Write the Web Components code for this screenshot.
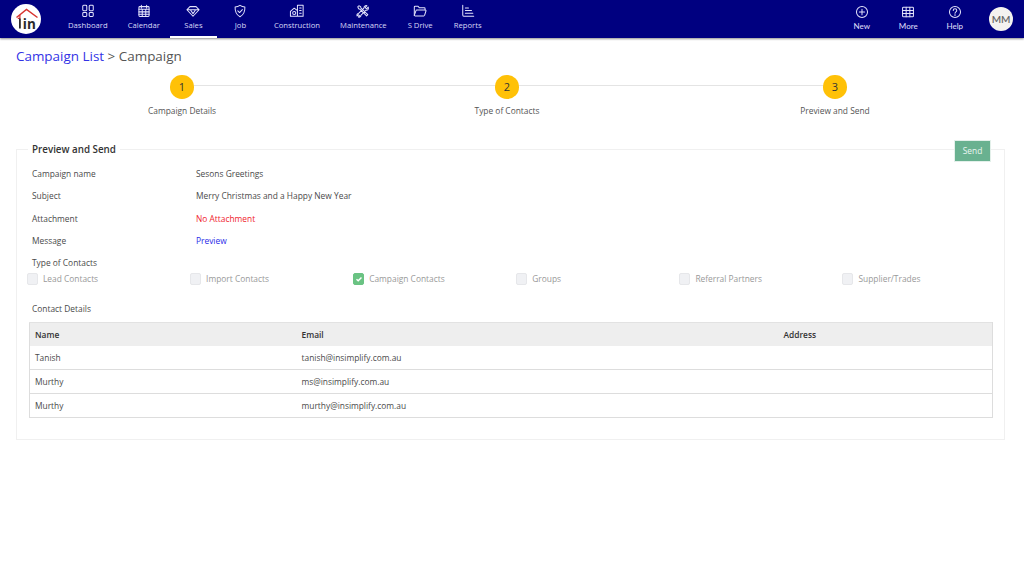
<!DOCTYPE html>
<html lang="en"><head><meta charset="utf-8"><title>Campaign</title>
<style>
html,body{margin:0;padding:0;background:#fff;width:1024px;height:580px;overflow:hidden;font-family:"Open Sans","Liberation Sans",sans-serif;color:#4a4a4a}
</style></head><body>
<app-header>
  <nav-item label="Dashboard"><svg viewBox="0 0 16 16"><rect x="2" y="1.500" width="4.6" height="6.100" rx="1"/><rect x="9.4" y="1.500" width="4.6" height="6.100" rx="1"/><rect x="2" y="9.800" width="4.6" height="4.400" rx="1"/><rect x="9.4" y="9.800" width="4.6" height="4.400" rx="1"/></svg></nav-item>
  <nav-item label="Calendar"><svg viewBox="0 0 16 16"><rect x="2.2" y="3" width="11.6" height="11.2" rx="1"/><path d="M5 1.5v3M11 1.5v3M2.2 6h11.6M2.2 9h11.6M2.2 11.7h11.6M6 6v8.2M10 6v8.2"/></svg></nav-item>
  <nav-item label="Sales" active><svg viewBox="0 0 16 16"><path d="M4.5 3h7L15 6.6 8 14 1 6.6zM1.2 6.6h13.6M5 6.6 8 11l3-4.4"/></svg></nav-item>
  <nav-item label="Job"><svg viewBox="0 0 16 16"><path d="M8 1.500c1.800 1.200 3.600 1.700 5.600 1.800.2 5-1 9-5.600 11.200C3.400 12.300 2.200 8.300 2.400 3.300 4.400 3.200 6.200 2.700 8 1.500z"/><path d="m5.500 7.800 2 2 3.200-3.400"/></svg></nav-item>
  <nav-item label="Construction"><svg viewBox="0 0 16 16"><path d="M.5 14V8.500L4.800 4.800 8.500 7.500V14zM8.500 14h6.500V1.500H8.500v6"/><circle cx="4.800" cy="10.300" r="1.800"/><path d="M11 4.500h1.800M11 7.500h1.800M11 10.500h1.800"/></svg></nav-item>
  <nav-item label="Maintenance"><svg viewBox="0 0 16 16"><path d="M2 3.200 3.300 2l2 1 .4 1.700 7.800 7.500-1.400 1.400-7.700-7.700L3 5.500zM14 3.500l-2 2-1.500-1.500 2-2c-1.800-.6-3.600.6-3.400 2.700L3 10.800c-1.600-.2-2.400 1.400-1.700 2.800l1.600-1.300 1.200 1.200-1.300 1.300c1.400.6 3-.2 2.700-1.800l6-5.900c2 .3 3.200-1.500 2.500-3.600z"/></svg></nav-item>
  <nav-item label="S Drive"><svg viewBox="0 0 16 16"><path d="M1.500 13V3.500c0-.5.400-.9.900-.9h3.400l1.500 1.800h5.600c.5 0 .9.400.9.900v1.300"/><path d="M1.500 13c.2.400.5.600.9.600h9.900c.4 0 .7-.2.900-.6l1.600-5c.2-.6-.2-1.100-.8-1.100H4.300c-.4 0-.8.300-.9.700z"/></svg></nav-item>
  <nav-item label="Reports"><svg viewBox="0 0 16 16"><path d="M2 1.500v11.200c0 .7.500 1.200 1.200 1.200H14.500M5 4.500h3.500M5 7.500h7M5 10.500h8.500"/></svg></nav-item>
  <nav-item slot="right" label="New" compact><svg viewBox="0 0 16 16"><circle cx="8" cy="8" r="6.300"/><path d="M8 5v6M5 8h6"/></svg></nav-item>
  <nav-item slot="right" label="More" compact><svg viewBox="0 0 16 16"><rect x="1.800" y="2.500" width="12.400" height="11" rx="1"/><path d="M1.800 6.200h12.400M1.800 9.800h12.400M5.900 2.500v11M10.100 2.500v11"/></svg></nav-item>
  <nav-item slot="right" label="Help" compact><svg viewBox="0 0 16 16"><circle cx="8" cy="8" r="6.300"/><path d="M6 6.300c0-1.200.9-1.900 2-1.900s2 .7 2 1.800c0 1.500-2 1.600-2 3.200M8 11v.9"/></svg></nav-item>
</app-header>
<bread-crumb link="Campaign List" current="Campaign"></bread-crumb>
<step-bar>
  <step-dot num="1" label="Campaign Details"></step-dot>
  <step-dot num="2" label="Type of Contacts"></step-dot>
  <step-dot num="3" label="Preview and Send"></step-dot>
</step-bar>
<preview-card heading="Preview and Send">
  <info-row label="Campaign name">Sesons Greetings</info-row>
  <info-row label="Subject">Merry Christmas and a Happy New Year</info-row>
  <info-row label="Attachment" tone="red">No Attachment</info-row>
  <info-row label="Message" tone="blue">Preview</info-row>
  <contact-types>
    <type-check label="Lead Contacts"></type-check>
    <type-check label="Import Contacts"></type-check>
    <type-check label="Campaign Contacts" checked></type-check>
    <type-check label="Groups"></type-check>
    <type-check label="Referral Partners"></type-check>
    <type-check label="Supplier/Trades"></type-check>
  </contact-types>
  <contact-table></contact-table>
</preview-card>
<script>
function def(name, render){
  customElements.define(name, class extends HTMLElement{
    connectedCallback(){ if(this.shadowRoot) return; const s=this.attachShadow({mode:'open'}); s.innerHTML=render(this); }
  });
}
const logo=`<svg viewBox="0 0 30 30" width="30" height="30"><circle cx="15" cy="15" r="15" fill="#fff"/>
<path d="M5.500 13.500 15.500 5.500l11 8" fill="none" stroke="#d8332f" stroke-width="1.500"/>
<path d="M8.900 11v3.400H6.800" fill="none" stroke="#d8332f" stroke-width="1.200"/>
<rect x="8" y="14.600" width="1.800" height="9.900" fill="#2b2b2b"/>
<text x="11.800" y="24.500" font-family="'Open Sans',sans-serif" font-weight="700" font-size="13.500" fill="#2b2b2b">in</text></svg>`;
def('app-header',()=>`<style>
:host{display:flex;height:38px;background:#000080;box-shadow:0 1px 2px rgba(0,0,0,.45);position:relative}
.logo{display:flex;margin:4px 17px 0 11px;height:30px}
.right{display:flex;margin-left:auto;align-items:flex-start}
nav{display:flex}
.av{width:24px;height:24px;border-radius:50%;background:#f4f2f0;color:#666;font:600 10px "Lato","Open Sans",sans-serif;display:flex;align-items:center;justify-content:center;margin:7px 11px 0 11px}
</style><div class="logo">${logo}</div><nav><slot></slot></nav>
<div class="right"><slot name="right"></slot><div class="av">MM</div></div>`);
def('nav-item',e=>{const c=e.hasAttribute('compact');const a=e.hasAttribute('active');return `<style>
:host{display:flex;flex-direction:column;align-items:center;box-sizing:border-box;height:38px;min-width:47px;padding:3.500px 10px 0;color:#d9d9f6;font:${c?'500 8px Lato':'7.700px "Open Sans"'},"Open Sans",sans-serif;${a?'border-bottom:2px solid #fff;':''}${c?'min-width:46.500px;padding:5px 6px 0;':''}}
::slotted(svg){width:14px;height:14px;fill:none;stroke:#e4e4fb;stroke-width:1.150;stroke-linejoin:round;stroke-linecap:round;overflow:visible}
span{display:block;line-height:11px;margin-top:2px;white-space:nowrap}
</style><slot></slot><span>${e.getAttribute('label')}</span>`});
def('bread-crumb',e=>`<style>
:host{display:block;padding:8.500px 16px 0;height:17.500px;font-size:13.440px;line-height:19px;color:#555}
a{color:#3333e6;text-decoration:none}
</style><a href="#">${e.getAttribute('link')}</a> &gt; ${e.getAttribute('current')}`);
def('step-bar',()=>`<style>
:host{display:grid;grid-template-columns:326px 324px 332px;margin:0 0 0 19px;width:982px;height:48px;padding-top:11px;position:relative}
.line{position:absolute;left:163px;width:653px;top:21px;height:1px;background:#e4e4e4}
</style><div class="line"></div><slot></slot>`);
def('step-dot',e=>`<style>
:host{display:flex;flex-direction:column;align-items:center;position:relative;font-size:8.400px;color:#555}
b{width:23.500px;height:23.500px;border-radius:50%;background:#ffc107;color:#333;font:400 11px/23.500px "Open Sans",sans-serif;text-align:center;display:block}
span{margin-top:6.500px;line-height:12px}
</style><b>${e.getAttribute('num')}</b><span>${e.getAttribute('label')}</span>`);
def('preview-card',e=>`<style>
:host{display:block;box-sizing:border-box;position:relative;margin:25.500px 19px 0 16px;height:291.500px;border:1px solid #f0f0f0;padding:12.500px 12px 0 12px;font-size:8.400px;color:#4a4a4a}
h3{position:absolute;margin:0;top:-8px;left:11px;padding:0 4px;background:#fff;font:600 9.800px/15px "Open Sans",sans-serif;color:#333}
button{position:absolute;right:13px;top:-10px;width:37px;height:22px;border:1px solid #e3f0ea;background:#69b190;color:#eaf6f0;font:8.400px "Open Sans",sans-serif;padding:0}
</style><h3>${e.getAttribute('heading')}</h3><button>Send</button><slot></slot>`);
def('info-row',e=>{const t=e.getAttribute('tone');const col=t==='red'?'#f01c2c':t==='blue'?'#2a2ae8':'#4a4a4a';return `<style>
:host{display:flex;height:22.500px;align-items:center;padding-left:3px}
.l{width:164px}.v{color:${col}}
</style><div class="l">${e.getAttribute('label')}</div><div class="v"><slot></slot></div>`});
def('contact-types',()=>`<style>
:host{display:block;padding-top:4.600px}
.t{padding-left:3px;height:12px;line-height:12px}
.g{display:grid;grid-template-columns:repeat(6,163.100px);margin:3px 0 0 -2px;height:16px}
.d{padding:15px 0 0 3px;line-height:12px;height:12px}
</style><div class="t">Type of Contacts</div><div class="g"><slot></slot></div><div class="d">Contact Details</div>`);
def('type-check',e=>{const c=e.hasAttribute('checked');return `<style>
:host{display:flex;align-items:center;color:#999;font-size:8.400px;height:14px}
i{box-sizing:border-box;width:11px;height:12px;border-radius:2px;background:${c?'#6ac383':'#f0f1f4'};border:1px solid ${c?'#6ac383':'#e6e7ea'};margin-right:5px;display:flex;align-items:center;justify-content:center}
svg{width:8px;height:8px;fill:none;stroke:#fff;stroke-width:1.400}
</style><i>${c?'<svg viewBox="0 0 8 8"><path d="m1.500 4.200 1.700 1.600 3.300-3.400"/></svg>':''}</i><span>${e.getAttribute('label')}</span>`});
def('contact-table',()=>{const rows=[['Tanish','tanish@insimplify.com.au'],['Murthy','ms@insimplify.com.au'],['Murthy','murthy@insimplify.com.au']];
return `<style>
:host{display:block;margin:7px 0 0 0}
table{border-collapse:collapse;width:964px;table-layout:fixed;font-size:8.400px;border:1px solid #ddd;border-top:1px solid #e2e2e2}
th{background:#eee;text-align:left;font-weight:600;color:#333;height:23px;padding:0 5px}
td{height:23px;padding:0 5px;border-bottom:1px solid #ddd;color:#4a4a4a}
</style><table><colgroup><col style="width:267px"><col style="width:482px"><col></colgroup>
<thead><tr><th>Name</th><th>Email</th><th>Address</th></tr></thead>
<tbody>${rows.map(r=>`<tr><td>${r[0]}</td><td>${r[1]}</td><td></td></tr>`).join('')}</tbody></table>`});
</script>
</body></html>
